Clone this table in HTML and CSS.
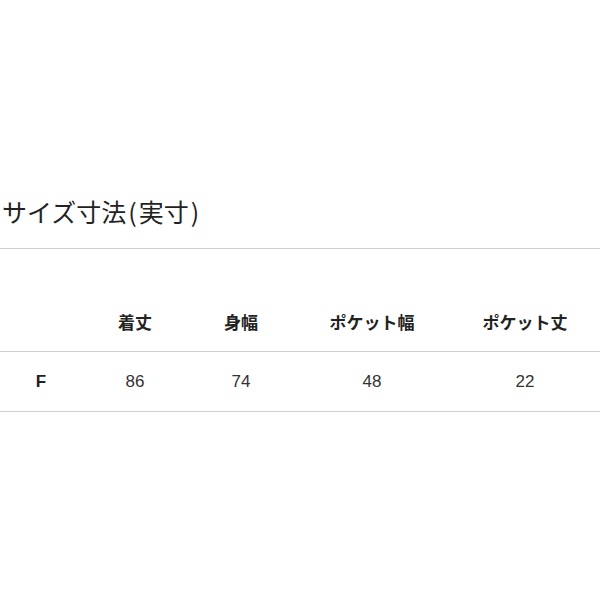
FILE: index.html
```html
<!DOCTYPE html>
<html lang="ja">
<head>
<meta charset="utf-8">
<link rel="stylesheet" href="styles.css">
</head>
<body>
<section class="size">
  <h2 class="size-title">サイズ寸法<span class="paren">(</span>実寸<span class="paren">)</span></h2>
  <table class="size-table">
    <colgroup>
      <col class="c-size">
      <col class="c-a">
      <col class="c-b">
      <col class="c-c">
      <col class="c-d">
    </colgroup>
    <thead>
      <tr>
        <th></th>
        <th>着丈</th>
        <th>身幅</th>
        <th>ポケット幅</th>
        <th>ポケット丈</th>
      </tr>
    </thead>
    <tbody>
      <tr>
        <th class="row-head">F</th>
        <td>86</td>
        <td>74</td>
        <td>48</td>
        <td>22</td>
      </tr>
    </tbody>
  </table>
</section>
</body>
</html>
```
FILE: styles.css
```css
html, body {
  margin: 0;
  padding: 0;
  background: #fff;
}
body {
  font-family: "Liberation Sans", "Noto Sans CJK JP", sans-serif;
  color: #222;
}
.size {
  padding-top: 193px;
}
.size-title {
  margin: 0;
  padding: 0 0 19px 2px;
  font-family: "Noto Sans CJK JP", sans-serif;
  font-size: 25px;
  line-height: 36px;
  font-weight: 400;
  color: #222;
  border-bottom: 1px solid #cfcfcf;
}
.paren {
  padding: 0 2px;
}
.size-table {
  margin-top: 43px;
  width: 600px;
  border-collapse: collapse;
  table-layout: fixed;
}
.c-size { width: 82px; }
.c-a { width: 106px; }
.c-b { width: 106px; }
.c-c { width: 156px; }
.c-d { width: 150px; }
.size-table th,
.size-table td {
  height: 59px;
  padding: 0;
  text-align: center;
  vertical-align: middle;
  border-bottom: 1px solid #cfcfcf;
}
.size-table thead th {
  font-family: "Noto Sans CJK JP", sans-serif;
  font-size: 17px;
  font-weight: 700;
  color: #222;
}
.size-table .row-head {
  font-family: "Liberation Sans", sans-serif;
  font-size: 17px;
  font-weight: 700;
  color: #222;
}
.size-table td {
  font-family: "Liberation Sans", sans-serif;
  font-size: 17px;
  color: #333;
}
```
